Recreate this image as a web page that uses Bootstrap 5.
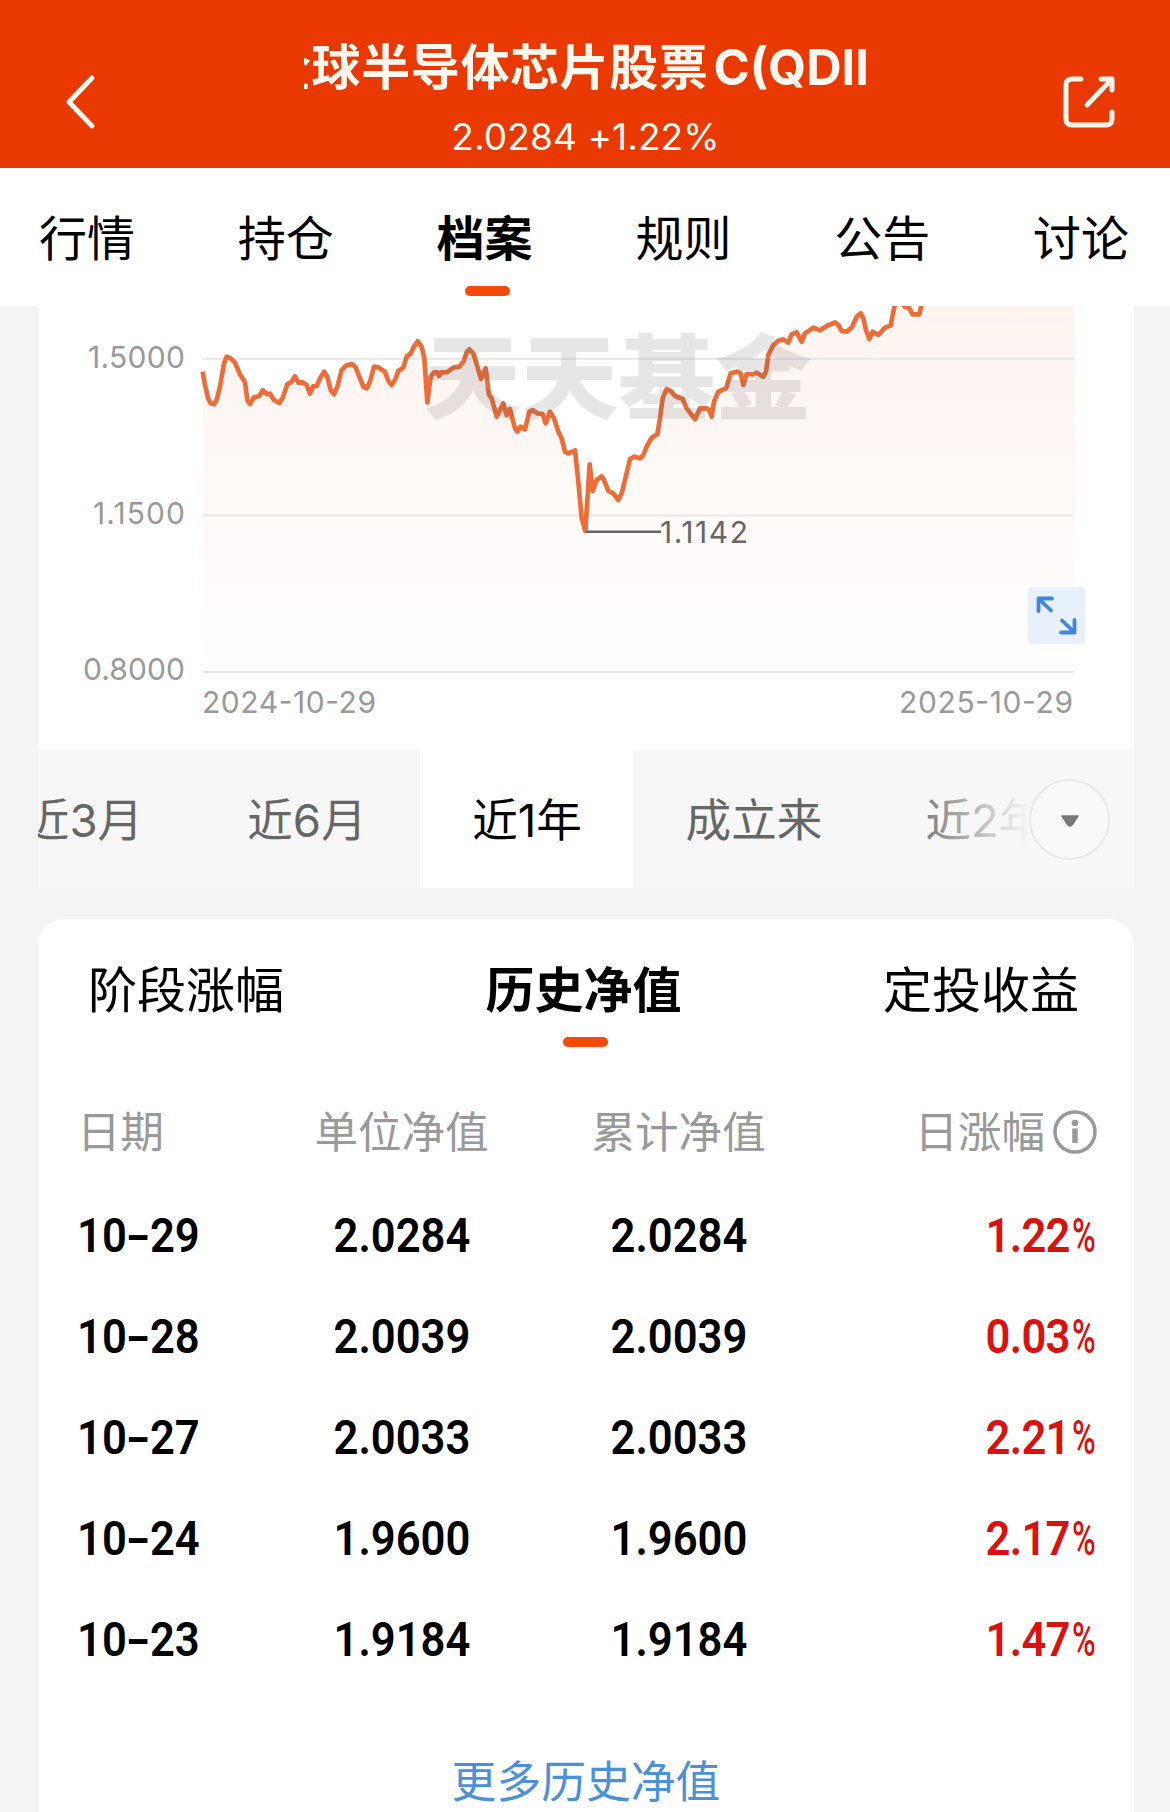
<!DOCTYPE html>
<html lang="zh-CN">
<head>
<meta charset="utf-8">
<meta name="viewport" content="width=device-width, initial-scale=1">
<title>历史净值</title>
<link href="https://cdn.jsdelivr.net/npm/bootstrap@5.3.0/dist/css/bootstrap.min.css" rel="stylesheet">
<style>
body{font-family:Inter,"Noto Sans CJK SC",sans-serif;background:#f4f4f4;color:#000;width:1170px;height:1812px;overflow:hidden}
svg{display:block}
.cjk{font-family:"Noto Sans CJK SC",sans-serif}
.topbar{height:168px;background:#ea3900;color:#fff8f0;padding:0 53px 0 64px}
.topbar>svg{margin-top:36px}
.fund{width:563px;height:168px;padding-top:31px;margin-left:12px}
.fund-name{height:66px;line-height:66px;font-size:49px;font-weight:700;letter-spacing:.6px}
.fund-name .latin{font-family:Inter,sans-serif;font-weight:650;font-size:49px;letter-spacing:0;margin:4px 0 0 5px}
.fund-val{font-size:37px;line-height:44px;margin-top:18px;font-weight:380;letter-spacing:.1px}
.main-tabs{height:138px;padding:32px 41px 0 39px;font-size:48px;line-height:70px}
.tick{width:45px;height:10px;border-radius:5px;background:#f74a07;margin-left:5px}
.main-tabs .tick{margin-top:16px}
.panel{margin:0 36px 0 38px;background:#fff}
.periods{height:138px;margin:0 36px 0 38px;background:#f7f7f7;font-size:45.6px;color:#666}
.periods>.cell{flex:none;height:138px;line-height:142px;text-align:center}
.fade-out{width:240px;height:138px;background:linear-gradient(90deg,rgba(247,247,247,0) 5%,rgba(247,247,247,.6) 35%,rgba(247,247,247,.88) 50%,#f7f7f7 57%);padding-right:24px}
.more-btn{width:81px;height:81px;border:2px solid #e8e8e8;background:#f9f9f9}
.hist{margin-top:31px;height:893px;border-radius:26px 26px 0 0}
.hist-tabs{padding:33px 55px 0 50px;font-size:49px;line-height:70px;height:162px}
.hist-tabs .tick{margin-top:15px}
.cols{display:grid;grid-template-columns:186px 277px 277px 1fr;padding:0 39px 0 39px;align-items:center}
.cols-head{height:104px;color:#999;font-size:43.5px;line-height:60px;padding:0 37px 6px 39px}
.nav-row{height:101px;font-family:Roboto,sans-serif;font-size:49px;font-weight:600;line-height:60px}
.din{display:inline-block;transform:scaleX(.89)}
.dl{transform-origin:left}.dr{transform-origin:right}
.dash{display:inline-block;transform:scaleX(1.6);margin:0 4px}
.up{color:#d9120f}
.up .din{letter-spacing:-.8px}
.pct{display:inline-block;font-weight:500;transform:scaleX(.74);transform-origin:right;margin-left:-7px}
.more{color:#4a90db;font-size:44.8px;line-height:60px;margin-top:59px}
</style>
</head>
<body>
<header class="topbar d-flex justify-content-between align-items-center">
  <svg width="34" height="56" viewBox="0 0 34 56" fill="none" stroke="#fff5ec" stroke-width="5" stroke-linecap="round" stroke-linejoin="round"><path d="M28 4 5 28l23 24"/></svg>
  <div class="fund d-flex flex-column align-items-center">
    <div class="fund-name cjk w-100 overflow-hidden d-flex justify-content-start text-nowrap"><span class="title-run">全球半导体芯片股票</span><span class="latin">C(QDII)</span></div>
    <div class="fund-val text-nowrap">2.0284 +1.22%</div>
  </div>
  <svg width="56" height="56" viewBox="0 0 56 56" fill="none" stroke="#fff5ec" stroke-width="5" stroke-linecap="round" stroke-linejoin="round"><path d="M20 5h-9q-6 0-6 6v34q0 6 6 6h34q6 0 6-6v-7M40 5h11v11M51 5 26 31"/></svg>
</header>
<nav class="main-tabs cjk bg-white d-flex justify-content-between">
  <div>行情</div><div>持仓</div>
  <div class="fw-bold d-flex flex-column align-items-center">档案<span class="tick"></span></div>
  <div>规则</div><div>公告</div><div>讨论</div>
</nav>
<section class="panel">
<svg width="1096" height="444" viewBox="38 306 1096 444" font-family="Inter, sans-serif">
  <defs><linearGradient id="g" gradientUnits="userSpaceOnUse" x1="0" y1="0" x2="0" y2="1131"><stop offset="0" stop-color="#fff4f0"/><stop offset=".9" stop-color="#fffdfd"/><stop offset="1" stop-color="#fff"/></linearGradient></defs>
  <g transform="translate(190 295) scale(.33333)">
    <path id="area" fill="url(#g)"/>
  </g>
  <path d="M202 358.7H1074M202 515.4H1074M202 672H1073" stroke="#e9e6e6" stroke-width="2"/>
  <g transform="translate(190 295) scale(.33333)">
    <path id="line" fill="none" stroke="#ee6c38" stroke-width="14" stroke-linejoin="round"/>
  </g>
  <text x="424" y="412" textLength="388" lengthAdjust="spacingAndGlyphs" font-family="'Noto Sans CJK SC'" font-weight="900" font-size="92" fill="#555" opacity=".14">天天基金</text>
  <path d="M586 531.7H661" stroke="#666" stroke-width="2.5"/>
  <g font-size="30" fill="#999">
    <text x="185" y="368" text-anchor="end" textLength="97">1.5000</text>
    <text x="185" y="524" text-anchor="end" textLength="92">1.1500</text>
    <text x="185" y="680" text-anchor="end" textLength="102">0.8000</text>
    <text x="202" y="713" textLength="174">2024-10-29</text>
    <text x="899" y="713" textLength="174">2025-10-29</text>
    <text x="660" y="543" fill="#666" textLength="88">1.1142</text>
  </g>
  <rect x="1028" y="587" width="57" height="57" rx="4" fill="#e7f0fb"/>
  <path d="M1038.500 611V598.500H1052M1039 599l12 11.500M1074.500 620V632.500H1061M1074 632l-12-11.500" fill="none" stroke="#4286da" stroke-width="3.800" stroke-linecap="round" stroke-linejoin="round"/>
</svg>
</section>
<div class="periods position-relative overflow-hidden d-flex text-nowrap">
  <div class="cell" style="width:221px;margin-left:-65px">近3月</div>
  <div class="cell" style="width:226px">近6月</div>
  <div class="cell bg-white text-black" style="width:214px">近1年</div>
  <div class="cell" style="width:240px">成立来</div>
  <div class="cell" style="width:222px">近2年</div>
  <div class="fade-out position-absolute end-0 top-0 d-flex align-items-center justify-content-end">
    <div class="more-btn rounded-circle d-flex align-items-center justify-content-center"><svg class="mt-1" width="20" height="14" viewBox="0 0 20 14"><path d="M2 2h16l-6 9q-2 2-4 0z" fill="#777" stroke="#777" stroke-width="1.500" stroke-linejoin="round"/></svg></div>
  </div>
</div>
<section class="panel hist">
  <div class="hist-tabs cjk d-flex justify-content-between">
    <div>阶段涨幅</div>
    <div class="fw-bold d-flex flex-column align-items-center">历史净值<span class="tick"></span></div>
    <div>定投收益</div>
  </div>
  <div class="cols cols-head cjk">
    <div>日期</div><div class="text-center">单位净值</div><div class="text-center">累计净值</div>
    <div class="d-flex justify-content-end align-items-center">日涨幅<svg class="ms-2 mt-1" width="44" height="44" viewBox="0 0 44 44"><circle cx="22" cy="22" r="20" fill="none" stroke="#999" stroke-width="3.500"/><circle cx="22" cy="13" r="3.300" fill="#999"/><path d="M22 18.500V33" stroke="#999" stroke-width="5.500"/></svg></div>
  </div>
  <div class="cols nav-row"><div><span class="din dl">10<span class="dash">-</span>29</span></div><div class="text-center"><span class="din">2.0284</span></div><div class="text-center"><span class="din">2.0284</span></div><div class="text-end up"><span class="din dr">1.22<span class="pct">%</span></span></div></div>
  <div class="cols nav-row"><div><span class="din dl">10<span class="dash">-</span>28</span></div><div class="text-center"><span class="din">2.0039</span></div><div class="text-center"><span class="din">2.0039</span></div><div class="text-end up"><span class="din dr">0.03<span class="pct">%</span></span></div></div>
  <div class="cols nav-row"><div><span class="din dl">10<span class="dash">-</span>27</span></div><div class="text-center"><span class="din">2.0033</span></div><div class="text-center"><span class="din">2.0033</span></div><div class="text-end up"><span class="din dr">2.21<span class="pct">%</span></span></div></div>
  <div class="cols nav-row"><div><span class="din dl">10<span class="dash">-</span>24</span></div><div class="text-center"><span class="din">1.9600</span></div><div class="text-center"><span class="din">1.9600</span></div><div class="text-end up"><span class="din dr">2.17<span class="pct">%</span></span></div></div>
  <div class="cols nav-row"><div><span class="din dl">10<span class="dash">-</span>23</span></div><div class="text-center"><span class="din">1.9184</span></div><div class="text-center"><span class="din">1.9184</span></div><div class="text-end up"><span class="din dr">1.47<span class="pct">%</span></span></div></div>
  <div class="more cjk text-center">更多历史净值</div>
</section>
<script src="https://cdn.jsdelivr.net/npm/bootstrap@5.3.0/dist/js/bootstrap.bundle.min.js"></script>
<script>
// Net value samples in chart units, grouped as [x offset, points]
const parts=[
[0,"38,230 45,270 55,312 62,325 72,328 80,315 90,275 102,205 110,185 122,190 135,203 150,238 165,262 172,315 180,327 192,307 208,303 218,286 232,298 240,296 252,315 268,324 278,308 292,268 305,260 315,244 325,263 337,262 350,270 360,296 370,273 380,273 390,250 402,230 412,245 422,285 432,298 442,275 455,225 468,212 484,207 496,215 508,245 520,275 530,280 540,260 552,215 565,217 585,230 595,258 605,270 615,255 625,228 640,218 650,185 662,175 672,155 683,139 695,155 703,190 712,322 722,245 732,232 742,232 747,243 754,232 770,232 790,218 808,215 820,200 830,172 838,163 850,175 862,215"],
[630,"243,252 257,220 267,300 275,310 290,365 310,325 320,360 330,342 345,400 352,410 362,395 375,403 388,350 398,345 412,355 428,357 437,385 450,350 462,370 475,410 485,430 495,470 505,475 525,466 535,560 545,670 556,708 569,508 578,588 590,555 605,544 612,555 625,588 640,595 655,615 665,595 675,555 690,492 703,485 720,490 730,480 740,455 755,428 772,418 780,370 788,310 800,282"],
[1380,"62,288 75,303 98,312 110,340 135,373 150,340 170,340 178,345 185,365 192,320 205,290 228,280 242,235 260,230 272,235 280,270 290,237 308,238 320,233 340,245 348,230 355,180 370,150 385,137 400,133 415,143 425,118 440,112 455,140 465,115 490,98 510,106 530,93 555,82 565,90 575,108 590,110 605,98 620,65 632,55 640,70 648,105 658,132 668,110 685,120 705,98 722,92 728,60 735,28 750,10 765,36 778,40 788,58 808,58 815,28 830,-20 1273,-20"]];
const pts=parts.flatMap(([dx,s])=>s.split(" ").map(p=>{const [x,y]=p.split(",").map(Number);return (x+dx)+" "+y}));
const d="M"+pts.join("L");
document.getElementById("line").setAttribute("d",d);
document.getElementById("area").setAttribute("d",d+"V1131H38Z");
// The title scrolls as a marquee; hold it part-way through
document.querySelector(".title-run").style.marginLeft="-42px";
</script>
</body>
</html>
